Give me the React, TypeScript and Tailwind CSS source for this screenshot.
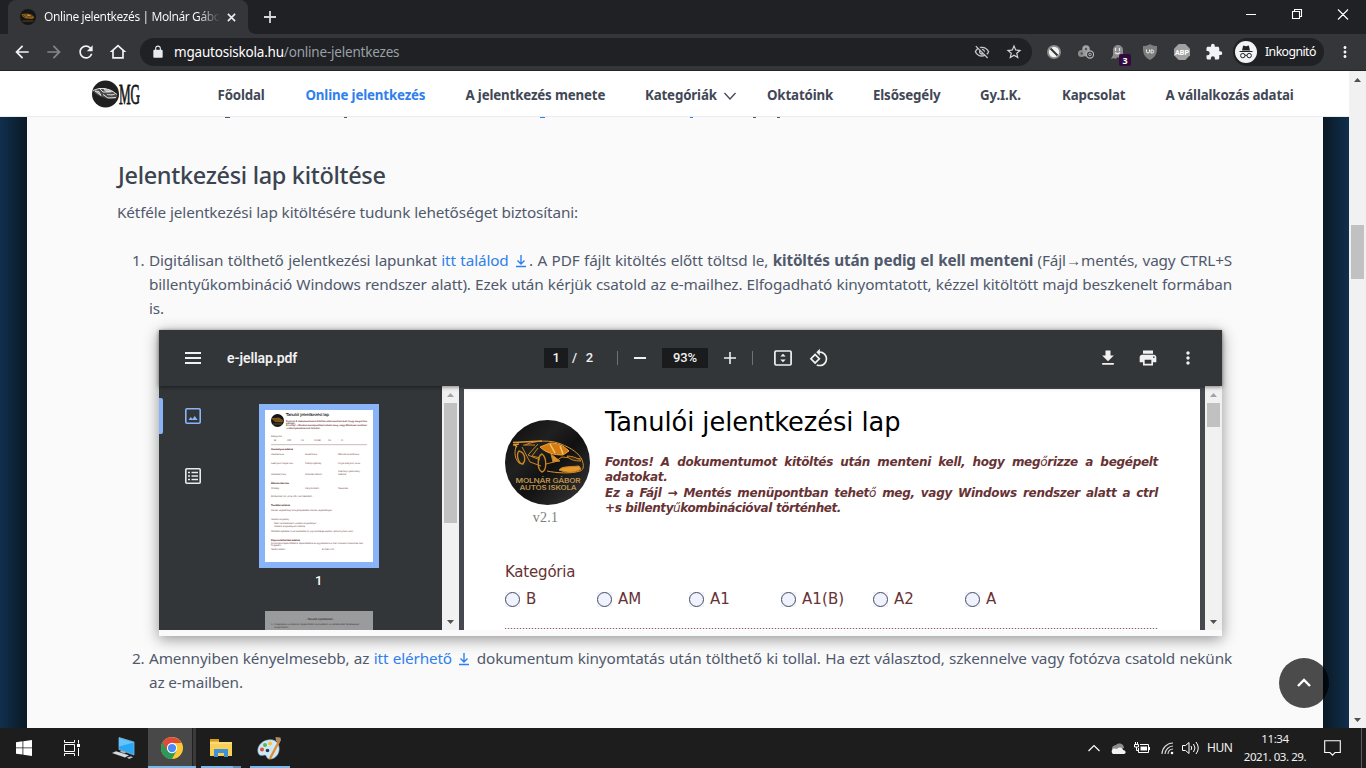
import React from 'react';

const UI = "font-['Noto_Sans','Open_Sans',sans-serif]";

function Icon({ d, className }: { d: string; className: string }) {
  return (
    <svg viewBox="0 0 24 24" fill="currentColor" className={`block shrink-0 ${className}`}>
      <path d={d} />
    </svg>
  );
}

const P = {
  back: 'M20 11H7.83l5.59-5.59L12 4l-8 8 8 8 1.41-1.41L7.83 13H20v-2z',
  forward: 'M12 4l-1.41 1.41L16.17 11H4v2h12.17l-5.58 5.59L12 20l8-8z',
  reload: 'M17.65 6.35A7.958 7.958 0 0012 4c-4.42 0-7.99 3.58-7.99 8s3.57 8 7.99 8c3.73 0 6.84-2.55 7.73-6h-2.08A5.99 5.99 0 0112 18c-3.31 0-6-2.69-6-6s2.69-6 6-6c1.66 0 3.14.69 4.22 1.78L13 11h7V4l-2.35 2.35z',
  home: 'M12 5.69l5 4.5V18H7v-7.81l5-4.5M12 3L2 12h3v8h14v-8h3L12 3z',
  lock: 'M18 8h-1V6c0-2.76-2.24-5-5-5S7 3.24 7 6v2H6c-1.1 0-2 .9-2 2v10c0 1.1.9 2 2 2h12c1.1 0 2-.9 2-2V10c0-1.1-.9-2-2-2zM8.9 8V6c0-1.71 1.39-3.1 3.1-3.1s3.1 1.39 3.1 3.1v2H8.9z',
  eyeOff: 'M12 6c3.79 0 7.17 2.13 8.82 5.5-.59 1.22-1.42 2.27-2.41 3.12l1.41 1.41c1.39-1.23 2.49-2.77 3.18-4.53C21.27 7.11 17 4 12 4c-1.27 0-2.49.2-3.64.57l1.65 1.65C10.66 6.09 11.32 6 12 6zm-1.07 1.14L13 9.21c.57.25 1.03.71 1.28 1.28l2.07 2.07c.08-.34.14-.7.14-1.07C16.5 9.01 14.48 7 12 7c-.37 0-.72.05-1.07.14zM2.01 3.87l2.68 2.68A11.738 11.738 0 001 11.5C2.73 15.89 7 19 12 19c1.52 0 2.98-.29 4.32-.82l3.42 3.42 1.41-1.41L3.42 2.45 2.01 3.87zm7.5 7.5l2.61 2.61c-.04.01-.08.02-.12.02a2.5 2.5 0 01-2.5-2.5c0-.05.01-.08.01-.13zm-3.4-3.4l1.75 1.75a4.6 4.6 0 00-.36 1.78 4.507 4.507 0 006.27 4.14l.98.98c-.88.24-1.8.38-2.75.38-3.79 0-7.17-2.13-8.82-5.5.7-1.43 1.72-2.61 2.93-3.53z',
  star: 'M22 9.24l-7.19-.62L12 2 9.19 8.63 2 9.24l5.46 4.73L5.82 21 12 17.27 18.18 21l-1.63-7.03L22 9.24zM12 15.4l-3.76 2.27 1-4.28-3.32-2.88 4.38-.38L12 6.1l1.71 4.04 4.38.38-3.32 2.88 1 4.28L12 15.4z',
  puzzle: 'M20.5 11H19V7c0-1.1-.9-2-2-2h-4V3.500a2.500 2.500 0 00-5 0V5H4c-1.1 0-1.990.9-1.990 2v3.800H3.500c1.490 0 2.700 1.210 2.700 2.700s-1.210 2.700-2.700 2.700H2V20c0 1.100.9 2 2 2h3.800v-1.500c0-1.490 1.210-2.700 2.700-2.700s2.700 1.210 2.700 2.700V22H17c1.100 0 2-.9 2-2v-4h1.500a2.500 2.500 0 000-5z',
  more: 'M12 8c1.100 0 2-.9 2-2s-.9-2-2-2-2 .9-2 2 .9 2 2 2zm0 2c-1.100 0-2 .9-2 2s.9 2 2 2 2-.9 2-2-.9-2-2-2zm0 6c-1.100 0-2 .9-2 2s.9 2 2 2 2-.9 2-2-.9-2-2-2z',
  rotate: 'M7.340 6.410L.86 12.900l6.490 6.480 6.490-6.480-6.500-6.490zM3.690 12.900l3.660-3.660L11 12.900l-3.660 3.660-3.650-3.660zm15.670-6.260A8.950 8.950 0 0013 4V.76L8.760 5 13 9.240V6c1.790 0 3.580.68 4.950 2.050a7.007 7.007 0 010 9.900 6.973 6.973 0 01-7.790 1.440l-1.490 1.490C10.020 21.620 11.510 22 13 22c2.300 0 4.610-.88 6.360-2.640a8.980 8.980 0 000-12.720z',
  download: 'M19 9h-4V3H9v6H5l7 7 7-7zM5 18v2h14v-2H5z',
  print: 'M19 8H5c-1.660 0-3 1.340-3 3v6h4v4h12v-4h4v-6c0-1.660-1.340-3-3-3zm-3 11H8v-5h8v5zm3-7c-.55 0-1-.45-1-1s.45-1 1-1 1 .45 1 1-.45 1-1 1zm-1-9H6v4h12V3z',
};

function GoldCar() {
  return (
    <g fill="none" stroke="#c98422" strokeWidth="1">
      <path d="M8 22.500l29-1.500M8 25l6-1M9 24l3 3" stroke="#dd9a35" strokeWidth="1.500" />
      <path d="M11 27c-2 6-1 12 3 16l5 1M20 25c10-5 27-5 36-1 10 4 18 9 21 16 2 5 2 10-2 11-9 3-24 2-33 0" stroke="#d9912c" />
      <path d="M14 31c-3 3-1 12 3 13 4-2 4-11-3-13zM37 34c-5 2-5 16 0 18 5-2 5-14 0-18z" strokeWidth="1.400" />
      <path d="M35 27l10-4c7 0 13 2 19 8l-6 4c-9 0-17-2-23-8z" fill="#d57a10" stroke="#e9a540" />
      <path d="M45 24l5 9M55 26l3 8" stroke="#f6c56a" strokeWidth="1.500" />
      <path d="M33 24l-10 11 12 5M33 28l-6 8 8 2M17 27l8 15 11 4M18 25l12 0M41 44l8-2 8-5 20 2" />
      <path d="M46 34l9 7-7 1z" fill="#d9912c" />
      <path d="M54 50c3-4 10-3 20-4l2 3c-6 4-14 4-22 1z" fill="#e79a2a" />
      <path d="M62 36c5 0 11 2 14 5-6 0-11-1-14-5z" fill="#3a2a12" />
    </g>
  );
}

function SchoolLogo() {
  return (
    <svg viewBox="0 0 85 85" className="block h-[85px] w-[85px] shrink-0">
      <defs>
        <linearGradient id="steel" x1="0" y1="0" x2="1" y2="1">
          <stop offset="0" stopColor="#0c0c0c" />
          <stop offset=".35" stopColor="#202020" />
          <stop offset=".55" stopColor="#111" />
          <stop offset="1" stopColor="#3a3a3a" />
        </linearGradient>
      </defs>
      <circle cx="42.500" cy="42.500" r="42.500" fill="url(#steel)" />
      <GoldCar />
      <text x="10.500" y="63" textLength="65" lengthAdjust="spacingAndGlyphs" fontSize="6" fontWeight="600" fontFamily="Inter, sans-serif" fill="#bd9550">MOLNÁR GÁBOR</text>
      <text x="14.500" y="70" textLength="57" lengthAdjust="spacingAndGlyphs" fontSize="6" fontWeight="600" fontFamily="Inter, sans-serif" fill="#bd9550">AUTÓS ISKOLA</text>
    </svg>
  );
}

function TabStrip() {
  return (
    <div className="flex h-[34px] shrink-0 items-stretch bg-[#202124] pl-2">
      <div className="relative flex w-[240px] items-center rounded-t-lg bg-[#35363a] pl-3 pr-[12px]">
        <svg viewBox="0 0 16 16" className="block size-4 shrink-0">
          <circle cx="8" cy="8" r="8" fill="#151515" />
          <path d="M1.500 5l6-.5 4 1 3 3-2 1.500-7-.5-3-2z" fill="#8a5a16" />
          <path d="M6 5.500l3-.5 3 2-4 .5zM3 6l2 2" fill="#d89b3a" stroke="#222" strokeWidth=".5" />
          <path d="M2.500 12h11" stroke="#5a4320" />
        </svg>
        <div className="ml-2 w-[176px] overflow-hidden whitespace-nowrap bg-linear-to-r from-white from-88% to-transparent bg-clip-text text-[12px] tracking-[-0.400px] text-transparent">
          Online jelentkezés | Molnár Gábor
        </div>
        <svg viewBox="0 0 10 10" className="ml-auto block size-[9px] shrink-0" stroke="#e8eaed" strokeWidth="1.900">
          <path d="M1 1l8 8M9 1l-8 8" />
        </svg>
      </div>
      <svg viewBox="0 0 8 8" className="block size-2 shrink-0 self-end fill-[#35363a]">
        <path d="M0 0c0 4.400 3.600 8 8 8H0z" />
      </svg>
      <svg viewBox="0 0 12 12" className="ml-2 mt-[11px] block size-3" stroke="#d5d7da" strokeWidth="1.800">
        <path d="M6 0v12M0 6h12" />
      </svg>
      <svg viewBox="0 0 104 14" className="ml-auto mr-[17px] mt-[7px] block h-[14px] w-[104px]" fill="none" stroke="#fff" strokeWidth="1.100">
        <path d="M1 7.500h10M47.500 4.500h7v7h-7zM49.500 4v-1.500h7v7h-2M93 2.500l10 10M103 2.500l-10 10" />
      </svg>
    </div>
  );
}

function Extensions() {
  return (
    <>
      <svg viewBox="0 0 16 16" className="ml-[14px] block size-4" fill="none">
        <circle cx="8" cy="8" r="7" fill="#8b8b8b" />
        <circle cx="8" cy="8" r="5.200" fill="#f1f1f1" />
        <path d="M4.500 4.500l7 7" stroke="#333" strokeWidth="2" />
      </svg>
      <svg viewBox="0 0 16 16" className="ml-4 block size-4" fill="none">
        <circle cx="8" cy="5" r="3.800" fill="#a3a3a3" />
        <circle cx="3.500" cy="9.500" r="3.500" fill="#8d8d8d" />
        <circle cx="8" cy="9" r="3.500" fill="#9a9a9a" />
        <circle cx="8" cy="5" r="1.200" fill="#55565a" />
        <circle cx="3.700" cy="9.500" r="1.200" fill="#55565a" />
        <circle cx="12" cy="10.500" r="3.600" fill="#35363a" stroke="#b5b5b5" strokeWidth="1.200" />
        <circle cx="12" cy="10.500" r="1.300" stroke="#b5b5b5" />
      </svg>
      <div className="relative ml-4 size-4">
        <svg viewBox="0 0 16 16" className="block size-4">
          <path d="M1 15l2-4V6a5 5 0 0110 0v5l2 3-3-1-2 2-2-2-3 2-1-1z" fill="#8d8d8d" />
          <path d="M5.500 4v3M9.500 4v3M5 8.500q2.500 2.500 5 0" stroke="#e8e8e8" strokeWidth="1.200" fill="none" />
        </svg>
        <span className="absolute left-[9px] top-[10px] flex h-3 w-3 items-center justify-center rounded-[2px] bg-[#330a3d] text-[9px] font-bold leading-none text-white">3</span>
      </div>
      <svg viewBox="0 0 16 16" className="ml-4 block size-4">
        <path d="M8 0c2 1.500 4 2 7 2 .3 7-1 11-7 14C2 13 .7 9 1 2c3 0 5-.5 7-2z" fill="#7e7e7e" />
        <path d="M4.500 5.500v2.200q0 1.300 1.500 1.300t1.500-1.300V5.500M9 9V6h1.200q1.500 0 1.500 1.500T10.200 9z" fill="none" stroke="#f0f0f0" strokeWidth="1" />
      </svg>
      <svg viewBox="0 0 16 16" className="ml-4 block size-4">
        <path d="M4.700 0h6.600L16 4.700v6.600L11.300 16H4.700L0 11.300V4.700z" fill="#a1a1a1" />
        <text x="1" y="10.600" textLength="14" lengthAdjust="spacingAndGlyphs" fontSize="7.500" fontWeight="700" fontFamily="Roboto, sans-serif" fill="#fff">ABP</text>
      </svg>
      <Icon d={P.puzzle} className="ml-[15px] size-[18px] text-[#f1f3f4]" />
    </>
  );
}

function Toolbar() {
  return (
    <div className="flex h-[37px] shrink-0 items-center border-b border-[#242427] bg-[#35363a]">
      <Icon d={P.back} className="ml-3 size-5 text-[#f1f3f4]" />
      <Icon d={P.forward} className="ml-3 size-5 text-[#85868a]" />
      <Icon d={P.reload} className="ml-3 size-5 text-[#f1f3f4]" />
      <Icon d={P.home} className="ml-3 size-5 text-[#f1f3f4]" />
      <div className="ml-3 flex h-7 w-[892px] items-center rounded-full bg-[#202124] px-[10px] pl-[11px]">
        <Icon d={P.lock} className="size-[14px] text-[#e8eaed]" />
        <div className="ml-[9px] pt-px text-[13.500px] tracking-[-0.200px] text-[#9aa0a6]">
          <span className="text-white">mgautosiskola.hu</span>/online-jelentkezes
        </div>
        <Icon d={P.eyeOff} className="ml-auto size-4 text-[#c4c7ca]" />
        <Icon d={P.star} className="ml-[15px] mr-[-1px] size-[18px] text-[#d2d4d7]" />
      </div>
      <Extensions />
      <div className="ml-[10px] flex h-7 w-[91px] items-center rounded-full bg-[#202124] pl-[2px]">
        <svg viewBox="0 0 22 22" className="block size-[22px] shrink-0">
          <circle cx="11" cy="11" r="11" fill="#f1f3f4" />
          <path d="M7 9.500l1.200-5L11 5.200l2.800-.7 1.200 5zM4.500 10h13v1.100h-13z" fill="#202124" />
          <path d="M10 14.500q1-.8 2 0" stroke="#202124" fill="none" />
          <circle cx="7.800" cy="14.600" r="2.200" fill="none" stroke="#202124" />
          <circle cx="14.200" cy="14.600" r="2.200" fill="none" stroke="#202124" />
        </svg>
        <span className="ml-2 text-[12.300px] tracking-[-0.570px] text-white">Inkognitó</span>
      </div>
      <Icon d={P.more} className="ml-[12px] size-[18px] text-[#f1f3f4]" />
    </div>
  );
}

function ScrollArrow({ down, dim }: { down?: boolean; dim?: boolean }) {
  return (
    <svg viewBox="0 0 17 17" className={dim ? 'block size-[17px] shrink-0 fill-[#a3a3a3]' : 'block size-[17px] shrink-0 fill-[#505050]'}>
      <path d={down ? 'M5 7h7l-3.500 4z' : 'M5 11h7L8.500 7z'} />
    </svg>
  );
}

function SiteHeader() {
  const item = 'shrink-0 whitespace-nowrap';
  return (
    <header className="flex h-[46px] shrink-0 items-center border-b border-[#ebecf0] bg-white text-[13.300px] font-bold tracking-[-0.150px] text-[#414755]">
      <svg viewBox="0 0 50 28" className="ml-[91px] block h-7 w-[50px] shrink-0 overflow-visible">
        <circle cx="14.500" cy="14" r="13.500" fill="#202020" />
        <path d="M2 11q5-3.500 12-2.500 7 1 12 6 1 4-3 4.500-6 .5-12-2-6-2-9-6z" fill="#4c4c4c" />
        <path d="M2 10.500q6-3 12-2 7 1 12 6M9 9l3 3 6 0 4-.5M12 14.500l5 3.500 8-.5" stroke="#ddd" strokeWidth="1" fill="none" />
        <path d="M4 11l4 .5 2 4zM13 9.500l5 .5 2 1.500-5 0zM16 14.500l5 .5 3-1" stroke="#f3f3f3" fill="#aaa" strokeWidth=".7" />
        <text x="28" y="24" textLength="21" lengthAdjust="spacingAndGlyphs" fontSize="30" fontWeight="400" fontFamily="Liberation Serif, serif" fill="#151515" stroke="#151515" strokeWidth=".8">MG</text>
      </svg>
      <nav className="ml-[76.500px] flex items-center pt-[5px]">
        <span className={`${item} w-[88px]`}>Főoldal</span>
        <span className={`${item} w-[160px] text-[#2f80ed]`}>Online jelentkezés</span>
        <span className={`${item} w-[179.500px]`}>A jelentkezés menete</span>
        <span className={`${item} w-[79px]`}>Kategóriák</span>
        <svg viewBox="0 0 12 8" className="block h-2 w-3 shrink-0" fill="none" stroke="#414755" strokeWidth="1.300">
          <path d="M.5 1L6 7l5.500-6" />
        </svg>
        <span className={`${item} ml-[31px] w-[106px]`}>Oktatóink</span>
        <span className={`${item} w-[107px]`}>Elsősegély</span>
        <span className={`${item} w-[82px]`}>Gy.I.K.</span>
        <span className={`${item} w-[103.500px]`}>Kapcsolat</span>
        <span className={item}>A vállalkozás adatai</span>
      </nav>
    </header>
  );
}

function DownloadLink({ children }: { children: React.ReactNode }) {
  return (
    <span className="text-[#2f80ed]">
      {children}{' '}
      <svg viewBox="0 0 12 14" className="mx-[2px] mb-[1px] inline-block h-[14px] w-3 align-[-3px]" fill="none" stroke="#2f80ed" strokeWidth="1.400">
        <path d="M6 1v9M2.500 6.500L6 10l3.500-3.500M1 12.500h10" />
      </svg>
    </span>
  );
}

function Line({ children }: { children: React.ReactNode }) {
  return <div className="h-6 whitespace-nowrap text-justify [text-align-last:justify]">{children}</div>;
}

const thumbText: [number, number, number, string, boolean?][] = [
  [6, 27, 10.500, 'Kategória'], [9, 31, 2, 'B'], [22, 31, 4, 'AM'], [36, 31, 3, 'A1'], [49, 31, 7, 'A1(B)'], [63, 31, 3, 'A2'], [76, 31, 2, 'A'],
  [6, 40, 22, 'Személyes adatok', true],
  [6, 45, 13, 'Vezetékneve'], [40, 45, 12, 'Keresztneve'], [73, 45, 21, 'Második keresztneve'],
  [6, 54, 22, 'Leánykori teljes név'], [40, 54, 16, 'Állampolgárság'], [73, 54, 22, 'Anyja leánykori neve'],
  [6, 65, 15, 'Születési hely'], [40, 65, 17, 'Születési dátum'], [73, 62, 22, 'Személyi igazolvány'], [73, 65, 8, 'száma'],
  [6, 74, 18, 'Állandó lakcíme', true],
  [6, 79, 8, 'Ország'], [40, 79, 14, 'Irányítószám'], [73, 79, 10, 'Település'],
  [6, 87, 41, 'Közterület (út, utca, stb.) és házszám'],
  [6, 96, 19, 'További adatok', true],
  [6, 101, 61, 'Iskolai végzettség (a legmagasabb iskolai végzettsége)'],
  [6, 110, 18, 'Vezetői engedély'], [9, 114, 42, 'Nem rendelkezem vezetői engedéllyel'], [9, 117, 31, 'Vezetői engedélyem száma'],
  [6, 122, 82, 'Oktatás díjazása (1-es kezdettel is) jogosultsága esetén, amennyiben van)'],
  [6, 131, 29, 'Kapcsolattartási adatok', true],
  [6, 133.500, 92, 'Folyamatos tájékoztatásra, tájékoztatásra és egyeztetésre e-mail címeket is szeretnék neki'],
  [6, 136, 10, 'fogadni'], [6, 140, 14, 'Telefonszám'], [57, 140, 12, 'E-mail cím'],
];

function Thumbnail() {
  return (
    <svg viewBox="0 0 108 152" className="block h-[152px] w-[108px] bg-white" fontFamily="DejaVu Sans, sans-serif">
      <circle cx="12.500" cy="10.500" r="6.500" fill="#141414" />
      <path d="M7 8.500l7-.5 4 2.500-1 1.500-7-.5zM8 14h9" fill="#7a5216" stroke="#a2702a" strokeWidth=".6" />
      <text x="21" y="6" textLength="43" lengthAdjust="spacingAndGlyphs" fontSize="4" fill="#111" stroke="#111" strokeWidth=".1">Tanulói jelentkezési lap</text>
      <g fontSize="2.300" fontWeight="700" fill="#7c4a4d">
        <text x="21" y="11.500" textLength="81" lengthAdjust="spacingAndGlyphs">Fontos! A dokumentumot kitöltés után menteni kell, hogy megőrizze</text>
        <text x="21" y="14" textLength="9" lengthAdjust="spacingAndGlyphs">adatokat.</text>
        <text x="21" y="16.300" textLength="81" lengthAdjust="spacingAndGlyphs">Ez a Fájl → Mentés menüpontban tehető meg, vagy Windows rendszer</text>
        <text x="21" y="18.600" textLength="34" lengthAdjust="spacingAndGlyphs">+s billentyűkombinációval történhet.</text>
      </g>
      {thumbText.map(([x, y, w, t, b]) => (
        <text key={`${x}-${y}`} x={x} y={y + 0.3} textLength={w} lengthAdjust="spacingAndGlyphs" fontSize="2.300" fontWeight={b ? 700 : 400} fill={b ? '#5a2428' : '#7c5658'}>{t}</text>
      ))}
      <path d="M6 34.700h96" stroke="#cbb9ba" strokeWidth="1" />
    </svg>
  );
}

function PdfToolbar() {
  return (
    <div className="relative z-10 flex h-14 shrink-0 items-center bg-[#323639] font-['Roboto',sans-serif] text-[#f1f1f1] shadow-[0_1px_4px_rgba(0,0,0,0.500)]">
      <svg viewBox="0 0 16 12" className="ml-[26px] block h-3 w-4 fill-current">
        <path d="M0 0h16v2H0zM0 5h16v2H0zM0 10h16v2H0z" />
      </svg>
      <div className="ml-[26px] w-[317px] text-[14px] font-semibold leading-none tracking-[-0.080px]">e-jellap.pdf</div>
      <div className="flex h-5 w-6 items-center justify-center bg-[#191b1c] text-[13px] font-medium">1</div>
      <div className="ml-[4px] w-[21px] whitespace-nowrap text-[13px] font-medium [text-align-last:justify]">/ 2</div>
      <div className="ml-[24px] h-[14px] w-px bg-[#6f7274]" />
      <svg viewBox="0 0 12 12" className="ml-4 block size-3 fill-current"><path d="M0 5h12v2H0z" /></svg>
      <div className="ml-4 flex h-5 w-[46px] items-center justify-center bg-[#191b1c] text-[13px] font-medium">93%</div>
      <svg viewBox="0 0 12 12" className="ml-4 block size-3 fill-current"><path d="M5.200 0h1.600v5.200H12v1.600H6.800V12H5.200V6.800H0V5.200h5.200z" /></svg>
      <div className="ml-4 h-[14px] w-px bg-[#6f7274]" />
      <svg viewBox="0 0 18 16" className="ml-[21px] block h-4 w-[18px]" fill="none" stroke="currentColor" strokeWidth="1.700">
        <rect x=".9" y="1" width="16.200" height="14" rx="1.200" />
        <path d="M6.300 6.500h5.400L9 3.700zM6.300 9.500h5.400L9 12.300z" fill="currentColor" stroke="none" />
      </svg>
      <Icon d={P.rotate} className="ml-[17px] size-[20px]" />
      <Icon d={P.download} className="ml-auto size-5" />
      <Icon d={P.print} className="ml-5 size-5" />
      <Icon d={P.more} className="ml-5 mr-6 size-5" />
    </div>
  );
}

function Radio({ label, w }: { label: string; w: string }) {
  return (
    <div className={`flex items-center ${w}`}>
      <span className="flex size-[15px] shrink-0 bg-[#f0f3ff]">
        <span className="size-[15px] rounded-full border border-[#4c4d55] bg-[#eff2ff]" />
      </span>
      <span className="ml-[6px] text-[15px] tracking-[0.100px]">{label}</span>
    </div>
  );
}

function PdfPage() {
  const bold = 'whitespace-nowrap text-justify font-bold italic [text-align-last:justify]';
  return (
    <div className="mt-[3px] w-[736px] overflow-hidden bg-white font-['DejaVu_Sans',sans-serif] text-[#673234]">
      <div className="flex pl-[41px] pt-[31px]">
        <div className="flex w-[85px] flex-col items-center">
          <SchoolLogo />
          <div className="mr-1 mt-[3px] font-['Liberation_Serif',serif] text-[14px] leading-[19px] tracking-[0.200px] text-[#7d7d7d]">v2.1</div>
        </div>
        <div className="-mt-[15px] ml-[15px] w-[553px]">
          <div className="whitespace-nowrap text-[25.700px] leading-[34px] tracking-[-0.070px] text-black">Tanulói jelentkezési lap</div>
          <div className="mt-[16px] text-[12px] leading-[15.300px] tracking-[-0.300px]">
            <div className={bold}>Fontos! A dokumentumot kitöltés után menteni kell, hogy meg<span className="font-normal">ő</span>rizze a begépelt</div>
            <div className={`${bold} w-[60px]`}>adatokat.</div>
            <div className={bold}>Ez a Fájl → Mentés menüpontban tehet<span className="font-normal">ő</span> meg, vagy Windows rendszer alatt a ctrl</div>
            <div className={`${bold} w-[236px] tracking-[-0.420px]`}>+s billenty<span className="font-normal">ű</span>kombinációval történhet.</div>
          </div>
        </div>
      </div>
      <div className="ml-[41px] mt-[35px] text-[15px] leading-5 tracking-[-0.200px]">Kategória</div>
      <div className="ml-[41px] mt-[7px] flex h-5 leading-5">
        <Radio label="B" w="w-[92px]" />
        <Radio label="AM" w="w-[92px]" />
        <Radio label="A1" w="w-[92px]" />
        <Radio label="A1(B)" w="w-[92px]" />
        <Radio label="A2" w="w-[92px]" />
        <Radio label="A" w="w-[92px]" />
      </div>
      <div className="ml-[41px] mt-[18.500px] h-px w-[653px] bg-[repeating-linear-gradient(90deg,#8b6062_0_1px,#e9dfdf_1px_3px)]" />
    </div>
  );
}

function PdfViewer() {
  return (
    <div className="ml-[10px] mt-[10px] flex h-[306px] w-[1063px] flex-col bg-[#fafafa] shadow-[0_3px_14px_rgba(0,0,0,0.420)]">
      <PdfToolbar />
      <div className="flex h-[244px] overflow-hidden bg-[#45494d]">
        <div className="flex w-[283px] bg-[#323639]">
          <div className="flex w-[100px]">
            <div className="mt-3 h-9 w-1 rounded-r-[2px] bg-[#8ab4f8]" />
            <div className="ml-[22px] mt-[22px] flex flex-col gap-[44px]">
              <svg viewBox="0 0 16 16" className="block size-4" fill="none" stroke="#8ab4f8" strokeWidth="1.600">
                <rect x=".8" y=".8" width="14.400" height="14.400" rx="1.200" />
                <path d="M3.500 12l2.300-3 1.600 2 2.300-3 3 4z" fill="#8ab4f8" stroke="none" />
              </svg>
              <svg viewBox="0 0 16 16" className="block size-4" fill="none" stroke="#e8eaed" strokeWidth="1.600">
                <rect x=".8" y=".8" width="14.400" height="14.400" rx="1" />
                <path d="M3 4.500h2M3 8h2M3 11.500h2M6.500 4.500H13M6.500 8H13M6.500 11.500H13" />
              </svg>
            </div>
          </div>
          <div className="flex flex-col items-center pt-[18px]">
            <div className="border-[6px] border-[#8ab4f8]"><Thumbnail /></div>
            <div className="mt-[5px] h-[15px] pr-px font-['Roboto',sans-serif] text-[13px] font-medium leading-[15px] text-white">1</div>
            <svg viewBox="0 0 108 152" className="mt-[23px] block h-[152px] w-[108px] shrink-0 bg-[#999b9c]" fontFamily="DejaVu Sans, sans-serif" fill="#4e3f42">
              <text x="41" y="8.500" textLength="28" lengthAdjust="spacingAndGlyphs" fontSize="2.600" fontWeight="700">- Tanulói nyilatkozat -</text>
              <text x="6" y="13.500" textLength="88" lengthAdjust="spacingAndGlyphs" fontSize="2.300">1. A képzésre vonatkozó tájékoztatót elolvastam, a vállalkozási feltételeket</text>
              <text x="9" y="16.500" textLength="14" fontSize="2.300">megértettem</text>
            </svg>
          </div>
        </div>
        <div className="flex w-[17px] flex-col items-center justify-between bg-[#f1f1f1]">
          <ScrollArrow dim />
          <div className="mb-auto h-[120px] w-[13px] bg-[#c1c1c1]" />
          <ScrollArrow down />
        </div>
        <div className="w-[5px]" />
        <PdfPage />
        <div className="w-[5px]" />
        <div className="flex w-[17px] flex-col items-center bg-[#f1f1f1]">
          <ScrollArrow dim />
          <div className="mb-auto h-6 w-[13px] bg-[#c1c1c1]" />
          <ScrollArrow down />
        </div>
      </div>
    </div>
  );
}

function Content() {
  return (
    <main className="w-[1296px] shrink-0 overflow-hidden bg-[#fafafa] pl-[90px] text-[#50596c]">
      <div className="flex h-px">
        <i className="ml-[108px] w-[5px] bg-[#50586a]" />
        <i className="ml-[114px] w-[3px] bg-[#50586a]" />
        <i className="ml-[193px] w-[5px] bg-[#2f80ed]" />
        <i className="ml-[145px] w-[3px] bg-[#2f80ed]" />
        <i className="ml-[60px] w-[3px] bg-[#50586a]" />
        <i className="ml-[21px] w-[3px] bg-[#50586a]" />
      </div>
      <h2 className="ml-px mt-[40px] whitespace-nowrap text-[23.500px] font-medium leading-[34px] tracking-[-0.320px] text-[#3b4351]">Jelentkezési lap kitöltése</h2>
      <div className="text-[15.300px] leading-6 tracking-[-0.140px]">
        <p className="mt-2 w-[461px] whitespace-nowrap [text-align-last:justify]">Kétféle jelentkezési lap kitöltésére tudunk lehetőséget biztosítani:</p>
        <div className="mt-6 flex">
          <span className="w-8 shrink-0 pl-[15px]">1.</span>
          <div className="w-[1083px]">
            <Line>Digitálisan tölthető jelentkezési lapunkat <DownloadLink>itt találod</DownloadLink>. A PDF fájlt kitöltés előtt töltsd le, <b>kitöltés után pedig el kell menteni</b> (Fájl→mentés, vagy CTRL+S</Line>
            <Line>billentyűkombináció Windows rendszer alatt). Ezek után kérjük csatold az e-mailhez. Elfogadható kinyomtatott, kézzel kitöltött majd beszkenelt formában</Line>
            <div className="h-6">is.</div>
            <PdfViewer />
          </div>
        </div>
        <div className="mt-[10px] flex">
          <span className="w-8 shrink-0 pl-[15px]">2.</span>
          <div className="w-[1083px]">
            <Line>Amennyiben kényelmesebb, az <DownloadLink>itt elérhető</DownloadLink> dokumentum kinyomtatás után tölthető ki tollal. Ha ezt választod, szkennelve vagy fotózva csatold nekünk</Line>
            <div className="h-6">az e-mailben.</div>
          </div>
        </div>
      </div>
    </main>
  );
}

function Taskbar() {
  return (
    <footer className="flex h-10 shrink-0 items-center bg-[#1d1d1d] text-[#f2f2f2]">
      <svg viewBox="0 0 16 16" className="ml-4 block size-4 fill-white">
        <path d="M0 2.200L6.500 1.300v6.200H0zM7.300 1.200L16 0v7.500H7.300zM0 8.300h6.500v6.300L0 13.700zM7.300 8.300H16V16l-8.700-1.200z" />
      </svg>
      <svg viewBox="0 0 16 16" className="ml-8 block size-4" fill="none" stroke="#fff" strokeWidth="1">
        <path d="M.5 0v2.500h10V0M.5 16v-2.500h10V16M.5 4.500h10v7H.5zM14.500 0v3.500M14.500 8v8" />
        <path d="M13 4h3v3h-3z" fill="#fff" stroke="none" />
      </svg>
      <svg viewBox="0 0 24 24" className="ml-8 block size-6">
        <path d="M7 1.500l15 4.500v13L7 13.500z" fill="#2aa6f5" stroke="#7fb4d4" strokeWidth=".8" />
        <path d="M7 2l15 4.500-15 4z" fill="#63c4fb" />
        <path d="M0 17l4-1.800 13 4-4 2.300z" fill="#d5dade" />
        <path d="M9 14.500l5 1.500-1 1.500-5-1.500z" fill="#aeb6bc" />
        <path d="M15 21.500l4-1.300 2 1-4 1.800z" fill="#bcc3c8" />
      </svg>
      <div className="ml-3 flex h-10 w-12 flex-col">
        <div className="flex h-[38px]">
          <div className="flex w-11 items-center justify-center bg-[#484848] pl-[4px] pt-[2px]">
            <svg viewBox="0 0 24 24" className="block size-[22px]">
              <circle cx="12" cy="12" r="12" fill="#fcc934" />
              <path d="M12 12l5 3-5 9A12 12 0 011.600 6z" fill="#2a9a58" />
              <path d="M12 12L6.800 15 1.600 6A12 12 0 0122.400 6.500H12z" fill="#dc4b3e" />
              <circle cx="12" cy="12" r="5.600" fill="#fff" />
              <circle cx="12" cy="12" r="4.500" fill="#4c8bf5" />
            </svg>
          </div>
          <div className="w-1 border-l border-[#202020] bg-[#3a3a3a]" />
        </div>
        <div className="h-[2px] bg-[#76b9ed]" />
      </div>
      <div className="ml-[5px] flex h-10 w-10 flex-col justify-between">
        <svg viewBox="0 0 22 18" className="ml-[9px] mt-[11px] block h-[18px] w-[22px]">
          <path d="M0 0h9v3h13v14H0z" fill="#f9cf58" />
          <path d="M0 0h9v2.500H0z" fill="#d89b13" />
          <path d="M0 3h22v2H0z" fill="#fbda79" />
          <path d="M4 18v-8h14v8h-4v-4H8v4z" fill="#3f92d6" />
        </svg>
        <div className="flex h-[2px] bg-[#76b9ed]"><span className="ml-auto w-2 bg-[#5d91ba]" /></div>
      </div>
      <div className="ml-[9px] flex h-10 w-10 flex-col justify-between">
        <svg viewBox="0 0 26 24" className="ml-[7px] mt-[8px] block h-6 w-[26px]">
          <path d="M11 4C4 5 0 11 1 16s5 3 7 3 1 4 5 4c6 0 10-6 9-12S16 3 11 4z" fill="#cfe8f5" stroke="#8fb9d3" strokeWidth=".6" />
          <circle cx="8" cy="9" r="2" fill="#58b947" />
          <circle cx="13" cy="7.500" r="2" fill="#f5c431" />
          <circle cx="5" cy="13.500" r="2" fill="#e0503d" />
          <circle cx="10.500" cy="14.500" r="1.800" fill="#27384a" />
          <path d="M21 5l2 1-9 17-2 .5.500-2.500z" fill="#e08a2c" />
          <path d="M18.500 1l5 .5.500 3-2 2.500-3-2z" fill="#b08a62" />
        </svg>
        <div className="h-[2px] bg-[#76b9ed]" />
      </div>
      <svg viewBox="0 0 12 8" className="ml-auto block h-2 w-3" fill="none" stroke="#fff" strokeWidth="1.200">
        <path d="M.5 7L6 1.500 11.500 7" />
      </svg>
      <svg viewBox="0 0 16 11" className="ml-[10px] block h-[11px] w-4">
        <path d="M2 7a4 4 0 014-5c3-3 8-1 8 3z" fill="#8c8c8c" />
        <path d="M3 11a3 3 0 010-5c2-1 3 0 4 0 3-3 6-1 6 1 3 0 4 4 0 4z" fill="#f2f2f2" />
      </svg>
      <svg viewBox="0 0 16 12" className="ml-2 block h-3 w-4" fill="none" stroke="#fff" strokeWidth="1">
        <path d="M.5 2.500h4v2.500h-4zM1.500 0v2M3.500 0v2M2.500 5v3.500H4M6 2.500h8.500v8h-10V6M15.500 5v3" />
        <path d="M6.500 4.500h6.500v4h-6.500z" fill="#fff" stroke="none" />
      </svg>
      <svg viewBox="0 0 13 13" className="ml-[11px] block size-[13px]" fill="none" stroke="#d7d7d7" strokeWidth="1.100">
        <path d="M1 12C1 6 6 1 12 1M4 12c0-4 4-8 8-8M7 12c0-3 2-5 5-5" />
        <circle cx="11" cy="11" r="1.300" fill="#fff" stroke="none" />
      </svg>
      <svg viewBox="0 0 17 14" className="ml-[8px] block h-[14px] w-[17px]" fill="none" stroke="#fff" strokeWidth="1">
        <path d="M.5 4.500h3l3.500-3v11l-3.500-3h-3zM9 5q1.500 2 0 4M11.500 3q3 4 0 8M14 1q4.500 6 0 12" />
      </svg>
      <span className="ml-[8px] w-[27px] text-[12px] tracking-[-0.400px]">HUN</span>
      <div className="ml-[7px] w-[68px] whitespace-nowrap text-center text-[11.500px] leading-[18px] tracking-[-0.420px]">
        <div>11:34</div>
        <div>2021. 03. 29.</div>
      </div>
      <svg viewBox="0 0 17 16" className="ml-[15px] block h-4 w-[17px]" fill="none" stroke="#fff" strokeWidth="1.100">
        <path d="M.7.7h15.600v11.800h-5.300l-2.500 2.600-2.500-2.600H.7z" />
      </svg>
      <div className="ml-[20px] mr-[4px] h-10 w-px bg-[#5c5c5c]" />
    </footer>
  );
}

export default function App() {
  return (
    <div className={`flex h-[768px] w-[1366px] flex-col overflow-hidden ${UI}`}>
      <TabStrip />
      <Toolbar />
      <div className="flex h-[657px] shrink-0">
        <div className="relative flex w-[1349px] flex-col overflow-hidden">
          <SiteHeader />
          <div className="flex grow overflow-hidden">
            <div className="w-[27px] shrink-0 bg-linear-to-r from-[#102f4d] to-[#0a1925]" />
            <Content />
            <div className="w-[26px] shrink-0 bg-linear-to-r from-[#0a1925] to-[#102f4d]" />
          </div>
          <button className="absolute left-[1279px] top-[587px] flex size-[50px] items-center justify-center rounded-full bg-black/70">
            <svg viewBox="0 0 14 9" className="mt-[-2px] block h-[9px] w-[14px]" fill="none" stroke="#fff" strokeWidth="2.400">
              <path d="M1 8l6-6 6 6" />
            </svg>
          </button>
        </div>
        <div className="flex w-[17px] flex-col items-center bg-[#f1f1f1]">
          <ScrollArrow />
          <div className="mt-[137px] h-[54px] w-[13px] bg-[#c1c1c1]" />
          <div className="grow" />
          <ScrollArrow down />
        </div>
      </div>
      <Taskbar />
    </div>
  );
}
